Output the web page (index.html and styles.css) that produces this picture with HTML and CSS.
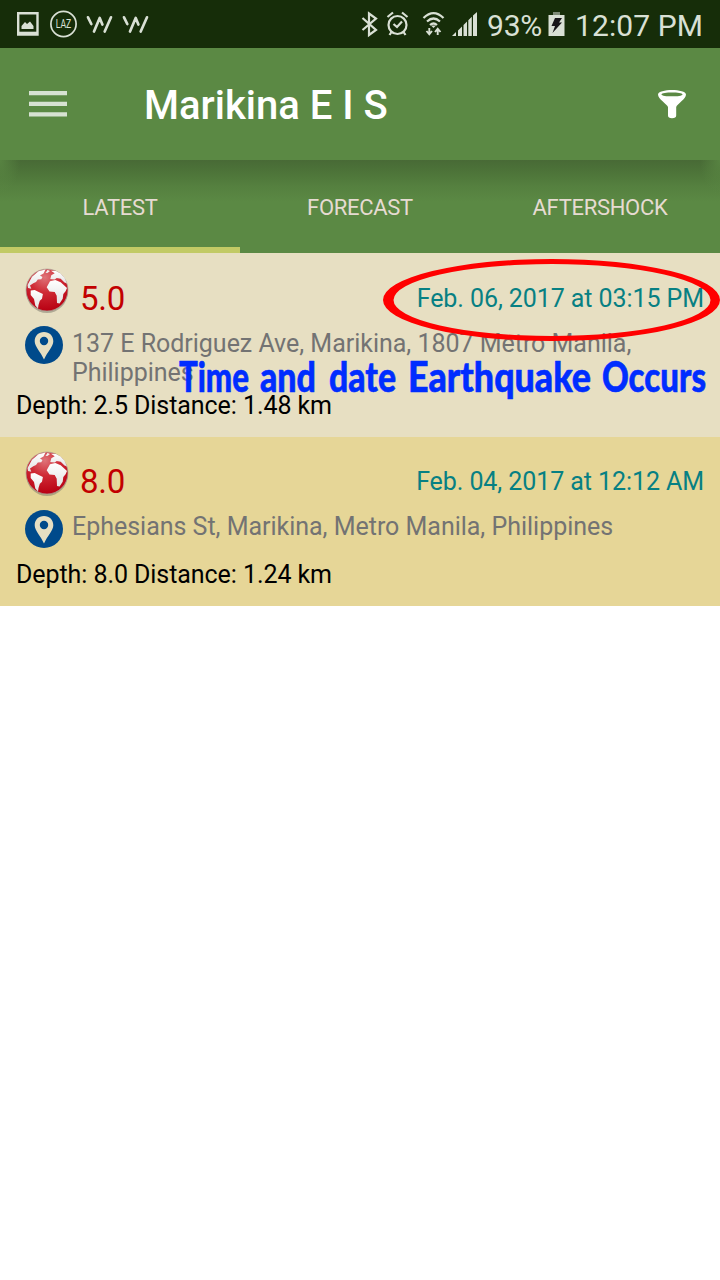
FILE: index.html
```
<!DOCTYPE html>
<html lang="en">
<head>
<meta charset="utf-8">
<title>Marikina E I S</title>
<link rel="stylesheet" href="styles.css">
</head>
<body>
<svg class="defs" width="0" height="0">
  <defs>
    <radialGradient id="sea" cx=".45" cy=".2" r=".8"><stop offset="0" stop-color="#df7479"/><stop offset=".45" stop-color="#cf2a35"/><stop offset="1" stop-color="#b80012"/></radialGradient>
    <linearGradient id="land" x1="0" y1="0" x2="0" y2="1"><stop offset="0" stop-color="#fff"/><stop offset="1" stop-color="#e2e2e2"/></linearGradient>
    <symbol id="globe" viewBox="0 0 46 46">
      <ellipse cx="23" cy="24" rx="20.800" ry="21" fill="#6d6a60" opacity=".45"/>
      <circle cx="23" cy="22" r="21" fill="url(#sea)" stroke="#a9a39a" stroke-width=".7"/>
      <g fill="url(#land)">
        <path d="M3.500 17L8 8.700L14.500 3.200L21.500 1.500L19.500 5.500L16 7.500L18.500 9L17.300 11.200L13.800 11.500L12 14L9.300 15.300L6 17.500L7.300 20.700L4 20Z"/>
        <path d="M6.700 22.500L10.700 22L14.700 24L18.900 26L18 30.700L15.800 32.700L14.500 37L14 40.500L11.300 37.500L10 31L6.700 27Z"/>
        <path d="M26 13.300L31.300 12L36.700 14.200L40 17.300L43 20L41.600 23.300L39.300 26L38.700 30.700L35.600 35.500L33 35L32.700 27.800L30.700 24L25.500 23.600L22.700 19.300Z"/>
        <path d="M26.300 11L27.300 7.300L30.700 5.300L27 2.800L32 3L36.500 5.500L40.500 9.700L43 15.500L40.500 14.500L36.700 10.700L32.700 10L30.700 11.500Z"/>
        <path d="M21.500 5L23.500 2L26 3L23.500 5Z"/>
      </g>
    </symbol>
    <symbol id="pin" viewBox="0 0 38 38">
      <circle cx="19" cy="19" r="19" fill="#004a8b"/>
      <path fill="#e7dfc2" fill-rule="evenodd" d="M19 6C13.500 6 9.700 9.900 9.700 15.200C9.700 20.500 15.500 25.500 19 33.500C22.500 25.500 28.300 20.500 28.300 15.200C28.300 9.900 24.500 6 19 6ZM19 10.800A4.200 4.200 0 1 1 19 19.200A4.200 4.200 0 1 1 19 10.800Z"/>
    </symbol>
  </defs>
</svg>
<div class="screen">
  <div class="status">
    <svg class="status-left" width="150" height="48" viewBox="0 0 150 48" fill="none" stroke="#d9e0d5">
      <path stroke-width="2.400" d="M18.200 13.200H37.500V34.500H18.200Z"/><path stroke-width="3" d="M18 33.200H38"/>
      <path fill="#d9e0d5" stroke="none" d="M21.500 29V26L25 22L27 24L30 21.500L33.500 26V29Z"/>
      <circle cx="63.500" cy="24" r="12.600" stroke-width="1.700"/>
      <text class="laz" x="55.700" y="28.400" textLength="15.500" lengthAdjust="spacingAndGlyphs">LAZ</text>
      <g stroke-width="2.700" stroke-linecap="round" stroke-linejoin="round"><path d="M88 17.300L91.300 24M94 31.500L99.700 18L102.400 24.500M104.700 31.500L111 17.300"/><path d="M124 17.300L127.300 24M130 31.500L135.700 18L138.400 24.500M140.700 31.500L147 17.300"/></g>
    </svg>
    <svg class="status-icons" width="126" height="48" viewBox="356 0 126 48" fill="none" stroke="#d9e0d5" stroke-width="2.200">
      <path d="M362.500 18L376 30L369 35V13.500L376 18.500L362.500 30"/>
      <circle cx="397.500" cy="25" r="9"/><path d="M393.500 24L397 27L402 21.500M391.500 32L389.500 35M403.500 32L405.500 35M387.500 17L393 12.500M402 12.500L407.500 17"/>
      <path d="M423.500 18Q433.500 8 443.500 18M427 21.500Q433.500 15.500 440 21.500M430 25Q433.500 22 437 25"/>
      <path fill="#d9e0d5" stroke="none" d="M431 25.500H436L433.500 28Z"/>
      <path stroke-width="1.900" d="M429.300 28V34M426.500 31L429.300 34.300L432 31M437.700 35V29M435 32L437.700 28.700L440.500 32"/>
      <path fill="#d9e0d5" stroke="none" d="M452 36L456 32V36ZM458 30.500L462 26.500V36H458ZM463.500 25L467 21.500V36H463.500ZM468.300 20.200L471.800 16.700V36H468.300ZM473 15.500L477 12V36H473Z"/>
    </svg>
    <span class="battery-text">93%</span>
    <svg class="battery" width="17" height="48" viewBox="548 0 17 48"><path fill="#7e8b77" d="M553 12H560V15H553Z"/><path fill="#d9e0d5" d="M548.500 15H564.500V36H548.500Z"/><path fill="#171619" d="M555 18H562L559 22.500H562L552.500 33L555 26H551.500Z"/></svg>
    <span class="clock">12:07 PM</span>
  </div>
  <div class="appbar">
    <svg class="menu" width="38" height="26" viewBox="0 0 38 26"><path fill="#d7e2d2" d="M0 0H38V4.200H0ZM0 10.700H38V14.900H0ZM0 21.300H38V25.500H0Z"/></svg>
    <h1 class="title">Marikina E I S</h1>
    <svg class="filter" width="30" height="30" viewBox="657 89 30 30"><path fill="#fff" fill-rule="evenodd" d="M658 94.500C658 88.500 686 88.500 686 94.500C686 99 677 104 676.200 107V115.500Q676.200 118.300 672 118.300Q668 118.300 668 115.500V107C667 104 658 99 658 94.500ZM661.500 94.400C661.500 97 682.500 97 682.500 94.400C682.500 92 661.500 92 661.500 94.400Z"/></svg>
  </div>
  <div class="tabs">
    <div class="tab active">LATEST</div>
    <div class="tab">FORECAST</div>
    <div class="tab">AFTERSHOCK</div>
  </div>
  <div class="quake first">
    <div class="head"><svg class="globe"><use href="#globe"/></svg><span class="mag">5.0</span><span class="date">Feb. 06, 2017 at 03:15 PM</span></div>
    <div class="place"><svg class="pin"><use href="#pin"/></svg><p class="address">137 E Rodriguez Ave, Marikina, 1807 Metro Manila,<br>Philippines</p></div>
    <p class="depth">Depth: 2.5 Distance: 1.48 km</p>
    <svg class="note" width="720" height="184" viewBox="0 253 720 184">
      <path fill="#f00" fill-rule="evenodd" d="M383 300A168.500 41 0 0 1 720 300A168.500 41 0 0 1 383 300ZM393.500 300A158.500 36 0 0 0 710.500 300A158.500 36 0 0 0 393.500 300Z"/>
      <g class="note-text">
        <text x="179" y="392" textLength="70" lengthAdjust="spacingAndGlyphs">Time</text>
        <text x="260" y="392" textLength="56" lengthAdjust="spacingAndGlyphs">and</text>
        <text x="329" y="392" textLength="67" lengthAdjust="spacingAndGlyphs">date</text>
        <text x="408" y="392" textLength="183" lengthAdjust="spacingAndGlyphs">Earthquake</text>
        <text x="602" y="392" textLength="104" lengthAdjust="spacingAndGlyphs">Occurs</text>
      </g>
    </svg>
  </div>
  <div class="quake second">
    <div class="head"><svg class="globe"><use href="#globe"/></svg><span class="mag">8.0</span><span class="date">Feb. 04, 2017 at 12:12 AM</span></div>
    <div class="place"><svg class="pin"><use href="#pin"/></svg><p class="address">Ephesians St, Marikina, Metro Manila, Philippines</p></div>
    <p class="depth">Depth: 8.0 Distance: 1.24 km</p>
  </div>
</div>
</body>
</html>
```
FILE: styles.css
```
* { box-sizing: border-box; margin: 0; }
body { background: #fff; font-family: Roboto, "Noto Sans", sans-serif; overflow: hidden; }
svg { display: block; flex: none; }
.defs { position: absolute; }
.screen { width: 720px; height: 1280px; background: #fff; white-space: nowrap; }
.status { height: 48px; display: flex; background: #162d09; color: #d9e0d5; font-size: 30px; line-height: 51px; }
.status-icons { margin-left: 206px; }
.laz { font: 13px Roboto, sans-serif; fill: #d9e0d5; stroke: none; }
.battery-text { width: 61px; margin-left: 5px; letter-spacing: -.2px; }
.clock { margin-left: 10px; letter-spacing: .1px; }
.appbar { height: 112px; background: #5b8944; display: flex; align-items: center; padding: 0 33px 0 29px; }
.title { margin-left: 77px; color: #fff; font-size: 40px; font-weight: 500; line-height: 47px; padding-top: 3px; }
.filter { margin-left: auto; }
.tabs { height: 93px; display: grid; grid-template: 93px / repeat(3, 240px); background: radial-gradient(ellipse 20px 34px at 0 0, #5b8944cc, #5b894400), radial-gradient(ellipse 20px 34px at 100% 0, #5b8944cc, #5b894400), linear-gradient(#486a36, #4d7439 12px, #55803f 26px, #5b8944 42px); }
.tab { text-align: center; color: #e6dbd2; font-size: 22px; line-height: 95px; letter-spacing: -.3px; }
.active { box-shadow: inset 0 -6px #c2ca65; }
.quake { position: relative; }
.first { height: 184px; background: #e7dfc2; }
.second { height: 169px; background: #e6d697; }
.head { height: 72px; display: flex; padding: 0 16px 0 24px; }
.globe { width: 46px; height: 46px; margin-top: 15px; }
.mag { margin-left: 10px; font-size: 33px; line-height: 91px; color: #c20000; letter-spacing: -.3px; }
.date { margin-left: auto; font-size: 25px; line-height: 92px; color: #078083; letter-spacing: -.08px; }
.place { display: flex; padding-left: 25px; }
.pin { width: 38px; height: 38px; margin-top: 1px; }
.address { margin-left: 9px; padding-top: 4px; font-size: 25px; line-height: 29px; color: #737373; letter-spacing: -.02px; }
.depth { padding-left: 16px; font-size: 25px; line-height: 31px; color: #000; letter-spacing: -.07px; }
.first .place { height: 65px; }
.second .head { height: 71px; }
.second .head .globe { margin-top: 14px; }
.second .mag, .second .date { line-height: 90px; }
.second .pin { margin-top: 2px; }
.second .place { height: 51px; }
.note { position: absolute; left: 0; top: 0; }
.note-text { font: 900 42px Lato, sans-serif; fill: #002dff; stroke: #002dff; stroke-width: .6; stroke-linejoin: round; }
```
